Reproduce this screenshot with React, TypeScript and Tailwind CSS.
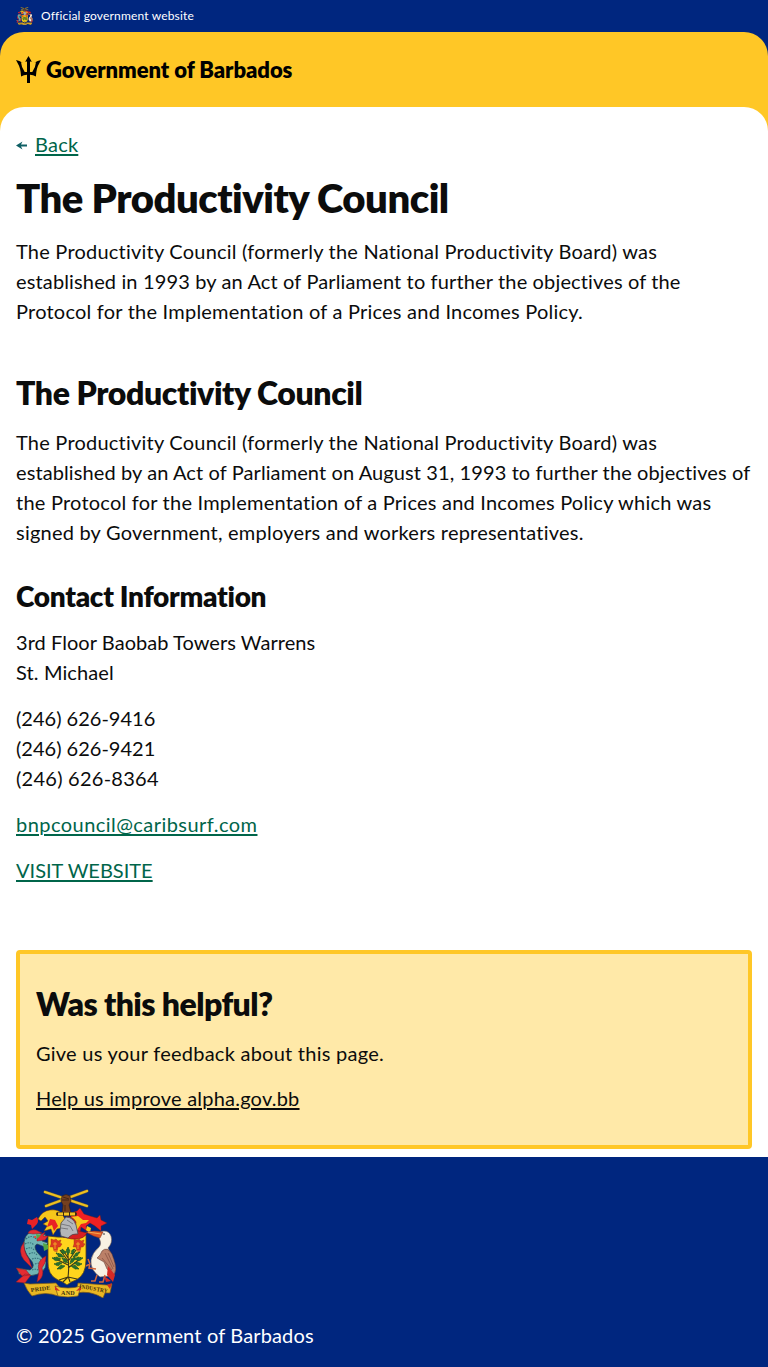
import type { ReactNode } from 'react';

function CoatOfArms({ className }: { className: string }) {
  return (
    <svg viewBox="8 9 100 109" className={className} role="img" aria-label="Barbados coat of arms">
      {/* crossed sugar canes */}
      <path d="M37 12 79 26M38 26 79 11" stroke="#6e6133" strokeWidth="3" strokeLinecap="round" />
      <path d="M37 12 79 26M38 26 79 11" stroke="#edbf20" strokeWidth="2.300" strokeLinecap="round" />
      {/* arm */}
      <path d="M54 16q4-3 8 0l1 5-2 4 2 8h-9l1-8-2-4z" fill="#75401f" stroke="#2f1b12" strokeWidth=".6" />
      <path d="M55 17l6 2M54 20h7M57 25v6" stroke="#2f1b12" strokeWidth=".7" />
      {/* mantling */}
      <path d="M30 39q4-8 12-9 8-1 12 4l3 5-3 9-5 1-4 6-2-6-7 2 3-5-4-2 5-3-3-4-4 4z" fill="#f7c61a" stroke="#73340d" strokeWidth=".5" />
      <path d="M20 39l4 1 5-3q2 4 0 7l-5 5-1-4-4-1z" fill="#e92225" />
      <path d="M42 39l5 1 3 6-4 5-2-6-5 2z" fill="#e92225" />
      <path d="M63 33l6-2 3-3 4 6 6 2 7 2 3-3 1 5 6 3-6 3 0 5-6-5-5-3-4 3 1 5-6-4-1 6-6-5-3-10z" fill="#ef2023" stroke="#74210f" strokeWidth=".4" />
      <path d="M63 37l7-1 5 4 6 0-3 3-5 1-4 6-5-8zM79 46l4 2-1 5-4-3z" fill="#f7c61a" />
      <path d="M50 34h17" stroke="#3d2a11" strokeWidth="4" strokeLinecap="round" />
      <path d="M50 34h17" stroke="#f4c222" strokeWidth="3" strokeDasharray="5 1" />
      {/* shield */}
      <path d="M40 56q19 3 38-1v25q0 15-10 20-6 2-9 5-3-3-9-5-11-5-10-20z" fill="#ffd51d" stroke="#5c451a" strokeWidth=".8" />
      {/* helmet */}
      <path d="M58 37q7-1 10 5l-1 8 12 3q-5 10-24 4l5-6z" fill="#d72022" stroke="#641919" strokeWidth=".5" />
      <path d="M58 37l-5 6-1 8 1 5 7 2q4-5 10-4l-2-9q-3-8-10-8z" fill="#b4b6b9" stroke="#4b4d52" strokeWidth=".8" />
      <path d="M53 44l9 2 3 5M53 48l7 1M59 40l6 4" stroke="#696b70" strokeWidth=".8" fill="none" />
      {/* orchids */}
      {[48, 71].map((x) => (
        <g key={x} transform={`translate(${x} 64)`}>
          <path d="M-5-5l3 1 2-1 2 2 3-1-1 3 2 1-2 3-2 0-1 5-3-1-1-4-3 0 1-3z" fill="#dc3920" stroke="#9a3812" strokeWidth=".4" />
          <path d="M-1-2v7M-3 0h4M-2 7h4" stroke="#f5b829" strokeWidth=".8" />
        </g>
      ))}
      {/* fig tree */}
      <path d="M61 68c-1 8 2 15 0 29M61 81L53 70M61 85l-12-6M61 88l12-9M62 80l7-10M61 78l-5-8M61 97l-9 3M61 96l2 6M61 97l-5 5M61 97l9 2" transform="translate(-1 0)" fill="none" stroke="#3d3617" strokeWidth="1.100" />
      <path d="M60 67l2 4-2 4-2-4zM54 69l4 3-2 2-3-2zM67 69l-2 5-2 0 1-4zM48 73l5 1 3 3-5 0zM72 72l-3 4-4 1 3-4zM44 78l5-1 4 2-5 2zM75 78l-5-1-4 2 5 2zM46 84l5-2 3 1-4 3zM74 84l-5-2-3 1 4 3zM49 89l4-4 4 1-4 3zM71 89l-4-4-4 1 4 3zM54 78l4 1 2 4-4-1zM67 77l-1 4-4 3 1-5z" fill="#28702b" stroke="#205426" strokeWidth=".9" strokeDasharray="1.200 .6" />
      {/* dolphin supporter */}
      <path d="M31 53q-13-4-15 9-1 8 5 16 8 8 1 12l-13-2 2 6 10 2q18-2 17-14L29 72q-4-6 0-8l8 3 3-4-6-2 4-6z" fill="#70b5b4" stroke="#2d4445" strokeWidth=".7" />
      <path d="M18 59q6-5 10 0M17 64q5-3 9 1M18 69q5-3 8 1M21 74q5-3 8 1M24 79q6-2 9 1M27 84q5-2 9 1M24 90q4-2 8 1" fill="none" stroke="#34717b" strokeWidth="1.100" strokeDasharray="1.500 1" />
      <path d="M20 53q2-4 8-3l6 3-9 1zM29 57l8-5-2 4 5 0-3 4-8 1zM16 62q-7 9 0 18l8 8-3-9q-6-8-5-17zM38 76q-10 5-7 15l-2 11q8-5 5-14 4-5 4-12zM8 88l10 2 4 5-8 1zM17 94l6 1-6 8-9-1z" fill="#e42c32" stroke="#851e2a" strokeWidth=".5" />
      <path d="M35 63l5 2 0 4-4 2zM28 54l5 1-4 4z" fill="#55a744" />
      <circle cx="27" cy="57" r="1" fill="#ef3e25" />
      {/* pelican supporter */}
      <path d="M91 58q-1-7 5-7 5 0 7 5 2 7-3 12l6 12-4 16-10 1q-10-7-9-17 1-7 8-13 3-3 0-9z" fill="#f8f1e3" stroke="#6b584c" strokeWidth=".6" />
      <path d="M94 71q5-5 10 3l3 9q2 7-1 12l-7-6-3-7-7-4 3-3z" fill="#bb8068" stroke="#593129" strokeWidth=".5" />
      <path d="M97 73l8 16M100 73l6 14M94 78l10 12" stroke="#895345" strokeWidth=".8" />
      <path d="M78 52q8-2 17 0l-3 6q-6-1-14-6z" fill="#df5525" stroke="#76301e" strokeWidth=".5" />
      <path d="M80 52l13 2" stroke="#f8c45e" strokeWidth=".8" />
      <circle cx="96" cy="54" r=".8" fill="#18202b" />
      <path d="M80 79l2 5-4 2M82 83l-1 5 7 1M89 95l-2 6-4 0M97 95l-2 7-4 0" fill="none" stroke="#d5683d" strokeWidth="1.500" />
      <path d="M100 86l7 9-2 7-6-7zM96 96l7 5-5 1z" fill="#d42a25" />
      {/* motto scroll */}
      <path d="M16 103l6 1 26-1 4 5-2 8q-12-5-26 0-5-5-8-13zM70 103l29 2 5-1-2 9-5 0-2 5q-13-8-27-5z" fill="#e9b723" stroke="#79561a" strokeWidth=".7" />
      <path d="M47 106q13 4 26 0l-3 10q-10 2-20 0z" fill="#f5c82f" stroke="#79561a" strokeWidth=".7" />
      <path d="M47 106l5 5-5-1zM73 106l-5 5 5-1zM99 105l5-2-2 6z" fill="#cf3025" />
      <g fill="#41310e" fontFamily="Liberation Serif, serif" fontSize="5.800" fontWeight="700">
        <text x="23" y="112" textLength="20" lengthAdjust="spacingAndGlyphs" transform="rotate(-7 23 112)">PRIDE</text>
        <text x="53" y="115" textLength="14" lengthAdjust="spacingAndGlyphs">AND</text>
        <text x="71" y="108" textLength="29" lengthAdjust="spacingAndGlyphs" transform="rotate(10 71 108)">INDUSTRY</text>
      </g>
    </svg>
  );
}

function Trident() {
  return (
    <svg viewBox="0 0 25 27" className="h-[27px] w-[25px] shrink-0" aria-hidden="true">
      <path d="M12.500 0 15.800 5.700 14 5.400V16H16.300Q19.700 11 20 6.300L18.300 6.700Q21.700 4.600 25 4.100L23.300 7.300Q20.300 12 19.900 20.600Q17.200 18.700 14 18.700V27H11V18.700Q7.800 18.700 5.100 20.600Q4.700 12 1.700 7.300L0 4.100Q3.300 4.600 6.700 6.700L5 6.300Q5.300 11 8.700 16H11V5.400L9.200 5.700Z" fill="#000" />
    </svg>
  );
}

function Line({ children, className = '' }: { children: ReactNode; className?: string }) {
  return <span className={`block whitespace-nowrap ${className}`}>{children}</span>;
}

const linkClass = 'text-[#00654a] underline decoration-2 underline-offset-[2px]';

export default function App() {
  return (
    <div className="min-h-[1367px] bg-white font-['Lato',sans-serif] text-[20px] leading-[30px] tracking-[0.22px] text-[#0b0c0c]">
      <div className="bg-[#00267f]">
        <div className="flex h-8 items-center gap-2 px-4 text-[12px] leading-4 tracking-[0.160px] text-white">
          <CoatOfArms className="h-[18px] w-[17px]" />
          <span>Official government website</span>
        </div>
        <div className="rounded-t-3xl bg-[#ffc726]">
          <header className="flex h-[75px] items-center gap-[5px] px-4 text-black">
            <Trident />
            <span className="text-[22px] font-extrabold tracking-[-0.060px]">Government of Barbados</span>
          </header>
          <div className="h-6 rounded-t-3xl bg-white" />
        </div>
      </div>

      <main className="-mt-0.5 px-4">
        <a href="#back" className="flex h-[30px] items-center text-[#00654a]">
          <svg viewBox="0 0 11 9" className="mt-0.5 mr-2 h-[9px] w-[11px]" aria-hidden="true">
            <path d="M0 4.500 6.500 .5 5 3.500H11V5.500H5L6.500 8.500Z" fill="#0e5f64" />
          </svg>
          <span className={linkClass}>Back</span>
        </a>
        <h1 className="mt-[14px] text-[40px] leading-[50px] font-extrabold tracking-[-0.5px]">The Productivity Council</h1>
        <p className="mt-[13px]">
          <Line>The Productivity Council (formerly the National Productivity Board) was</Line>
          <Line className="tracking-[0.140px]">established in 1993 by an Act of Parliament to further the objectives of the</Line>
          <Line>Protocol for the Implementation of a Prices and Incomes Policy.</Line>
        </p>
        <h2 className="mt-[47px] text-[32px] leading-10 font-extrabold tracking-[-0.390px]">The Productivity Council</h2>
        <p className="mt-[14px]">
          <Line>The Productivity Council (formerly the National Productivity Board) was</Line>
          <Line className="tracking-[0.100px]">established by an Act of Parliament on August 31, 1993 to further the objectives of</Line>
          <Line>the Protocol for the Implementation of a Prices and Incomes Policy which was</Line>
          <Line>signed by Government, employers and workers representatives.</Line>
        </p>
        <h3 className="mt-[31px] text-[28px] leading-9 font-extrabold tracking-[-0.290px]">Contact Information</h3>
        <address className="mt-[13px] not-italic">
          <Line className="tracking-[0.050px]">3rd Floor Baobab Towers Warrens</Line>
          <Line className="tracking-[0.120px]">St. Michael</Line>
        </address>
        <div className="mt-4">
          <Line className="tracking-[0px]">(246) 626-9416</Line>
          <Line className="tracking-[0px]">(246) 626-9421</Line>
          <Line className="tracking-[0.250px]">(246) 626-8364</Line>
        </div>
        <p className="mt-4 tracking-[0.450px]"><a href="#email" className={linkClass}>bnpcouncil@caribsurf.com</a></p>
        <p className="mt-4 tracking-[0px]"><a href="#website" className={linkClass}>VISIT WEBSITE</a></p>

        <section className="mt-[65px] h-[199px] rounded-[4px] border-4 border-[#ffc726] bg-[#ffe9a8] px-4 pt-[30px]">
          <h2 className="text-[32px] leading-10 font-extrabold tracking-[-0.560px]">Was this helpful?</h2>
          <p className="mt-[14px] tracking-[0.250px]">Give us your feedback about this page.</p>
          <p className="mt-[15px]"><a href="#feedback" className="underline decoration-2 underline-offset-[2px]">Help us improve alpha.gov.bb</a></p>
        </section>
      </main>

      <footer className="mt-2 h-[210px] bg-[#00267f] px-4 pt-8 text-white">
        <CoatOfArms className="h-[109px] w-[100px]" />
        <p className="mt-[22px] tracking-[0.150px]">© 2025 Government of Barbados</p>
      </footer>
    </div>
  );
}
